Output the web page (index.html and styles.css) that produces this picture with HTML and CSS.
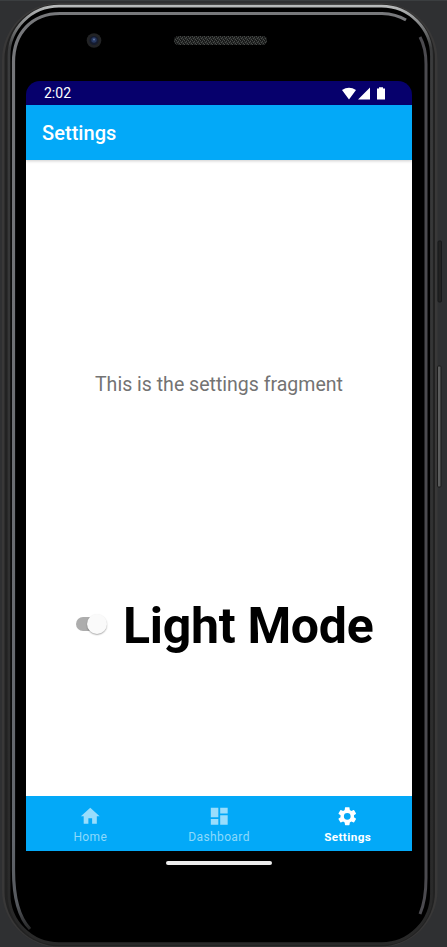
FILE: index.html
```html
<!DOCTYPE html>
<html lang="en">
<head>
<meta charset="utf-8">
<title>Settings</title>
<link rel="stylesheet" href="styles.css">
</head>
<body>
<div class="device">
  <svg class="shell" width="447" height="947" viewBox="0 0 447 947" fill="none" aria-hidden="true">
    <defs>
      <linearGradient id="rim" x1="0" y1="0" x2="0" y2="947" gradientUnits="userSpaceOnUse">
        <stop offset="0" stop-color="#c8cacb"/><stop offset=".015" stop-color="#a0a2a3"/><stop offset=".05" stop-color="#3b3c3d"/><stop offset="1" stop-color="#292929"/>
      </linearGradient>
      <linearGradient id="inner" x1="0" y1="12" x2="0" y2="932" gradientUnits="userSpaceOnUse">
        <stop offset="0" stop-color="#77787b"/><stop offset=".9" stop-color="#62666c"/><stop offset=".97" stop-color="#55585d"/><stop offset="1" stop-color="#222"/>
      </linearGradient>
      <pattern id="mesh" width="4" height="4" patternUnits="userSpaceOnUse">
        <path fill="#242625" d="M0 0h4v4H0z"/><path fill="#484b49" d="M0 0h1v1H0zM2 1h1v1H2zM1 2h1v1H1zM3 3h1v1H3z"/><path fill="#111" d="M1 0h1v1H1zM3 1h1v1H3zM0 3h1v1H0z"/>
      </pattern>
    </defs>
    <path fill="#3b3e40" d="M0 0h447v1H0z"/>
    <rect x="2" y="3" width="435.500" height="944" rx="57" fill="#393838"/>
    <rect x="4.500" y="4" width="430.500" height="942.500" rx="55" fill="#222"/>
    <rect x="9" y="6.200" width="422.500" height="937.500" rx="50" fill="#000" stroke="url(#rim)" stroke-width="2.800"/>
    <path d="M30 929Q13.500 912 13.500 870V62C13.500 33 32 13.500 60 13.500H382Q396 14 406 20" stroke="url(#inner)" stroke-width="3.200"/>
    <path d="M420 37Q426 48 426 64V878Q426 900 420 914" stroke="#4b4a4f" stroke-width="3"/>
    <circle cx="94" cy="40.500" r="7.300" fill="#222325"/>
    <circle cx="94" cy="40.500" r="4.500" fill="#151b2d"/>
    <circle cx="94" cy="40" r="2.700" fill="#263861"/><circle cx="94" cy="39.500" r="1" fill="#60749d"/>
    <rect x="174" y="36" width="93" height="9" rx="4.500" fill="url(#mesh)"/>
    <rect x="438" y="241" width="3.500" height="61" rx="1" fill="#222" stroke="#17181a"/>
    <rect x="437.500" y="366" width="3.500" height="121" rx="1" fill="#5b5c5c" stroke="#1b1b1b"/>
  </svg>
  <main class="screen">
    <header class="status">
      <span>2:02</span>
      <svg width="44" height="14" viewBox="0 0 44 14" fill="#fff" aria-hidden="true">
        <path d="M0 3Q7-1.500 14 3L7 12.500ZM28 .5V12.500H16ZM35 1.500H37V.3H41V1.500H43V12.500H35Z"/>
      </svg>
    </header>
    <h1 class="toolbar">Settings</h1>
    <section class="content">
      <p class="message">This is the settings fragment</p>
      <label class="mode"><span class="switch"><span class="thumb"></span></span><span class="mode-name">Light Mode</span></label>
    </section>
    <nav class="tabs">
      <a class="tab"><svg viewBox="0 0 24 24"><path d="M10 20v-6h4v6h5v-8h3L12 3 2 12h3v8z"/></svg><span>Home</span></a>
      <a class="tab"><svg viewBox="0 0 24 24"><path d="M3 13h8V3H3v10zm0 8h8v-6H3v6zm10 0h8V11h-8v10zm0-18v6h8V3h-8z"/></svg><span>Dashboard</span></a>
      <a class="tab active"><svg viewBox="0 0 24 24"><path d="M19.14 12.94c.04-.3.06-.61.06-.94 0-.32-.02-.64-.07-.94l2.030-1.580c.18-.14.23-.41.12-.61l-1.920-3.320c-.12-.22-.37-.29-.59-.22l-2.390.96c-.5-.38-1.030-.7-1.620-.94l-.36-2.540c-.04-.24-.24-.41-.48-.41h-3.840c-.24 0-.43.17-.47.41l-.36 2.540c-.59.24-1.130.57-1.620.94l-2.390-.96c-.22-.08-.47 0-.59.22L2.740 8.870c-.12.21-.08.47.12.61l2.030 1.580c-.05.3-.09.63-.09.94s.02.64.07.94l-2.030 1.580c-.18.14-.23.41-.12.61l1.920 3.320c.12.22.37.29.59.22l2.390-.96c.5.38 1.030.7 1.620.94l.36 2.540c.05.24.24.41.48.41h3.840c.24 0 .44-.17.47-.41l.36-2.540c.59-.24 1.130-.56 1.620-.94l2.390.96c.22.08.47 0 .59-.22l1.920-3.320c.12-.22.07-.47-.12-.61zM12 15.600A3.600 3.600 0 1 1 12 8.400a3.600 3.600 0 0 1 0 7.200z"/></svg><span>Settings</span></a>
    </nav>
  </main>
  <div class="gesture"></div>
</div>
</body>
</html>
```
FILE: styles.css
```css
* { box-sizing: border-box; }
body { margin: 0; background: #2f3032; font-family: Roboto, sans-serif; overflow: hidden; }
.device { position: relative; width: 447px; height: 947px; padding: 81px 35px 0 26px; }
.shell { position: absolute; inset: 0; }
.screen { position: relative; height: 770px; display: flex; flex-direction: column; overflow: hidden; border-radius: 14px 14px 0 0; }
.status { height: 24px; flex: none; display: flex; align-items: center; justify-content: space-between; padding: 0 26px 0 18px; background: #06006c; color: #fff; font-size: 14px; }
.status svg { margin-top: 1px; }
.toolbar { position: relative; height: 55px; flex: none; margin: 0; padding-left: 16px; background: #03a9f8; color: #fff; font-size: 20px; line-height: 57px; font-weight: 500; letter-spacing: .05px; box-shadow: 0 1px 3px #0003; }
.content { flex: 1; padding-top: 212px; background: #fff; }
.message { margin: 0; text-align: center; color: #737373; font-size: 19.550px; line-height: 26px; }
.mode { display: flex; align-items: center; margin-top: 198px; padding-left: 50px; height: 60px; }
.switch { width: 31px; height: 14px; flex: none; display: flex; align-items: center; justify-content: flex-end; background: linear-gradient(#adadad, #adadad) left / 24px 100% no-repeat; border-radius: 7px; margin: 0 16px 4px 0; }
.thumb { width: 20px; height: 20px; flex: none; border-radius: 50%; background: #fafafa; box-shadow: 0 1px 1.500px #0005; }
.mode-name { font-size: 50px; font-weight: 700; letter-spacing: -.3px; color: #000; white-space: nowrap; }
.tabs { height: 55px; flex: none; display: flex; background: #03a9f8; }
.tab { flex: 1; display: flex; flex-direction: column; align-items: center; padding-top: 9px; color: #8dd9fb; font-size: 12px; line-height: 14px; letter-spacing: .4px; }
.tab svg { width: 22.500px; height: 22.500px; fill: #99ddfc; margin-bottom: 2.500px; }
.tab.active { color: #fff; font-size: 11.700px; font-weight: 700; }
.tab.active svg { fill: #fff; }
.gesture { position: relative; width: 106px; height: 4px; margin: 10px auto 0; border-radius: 2px; background: #ededed; }
```
